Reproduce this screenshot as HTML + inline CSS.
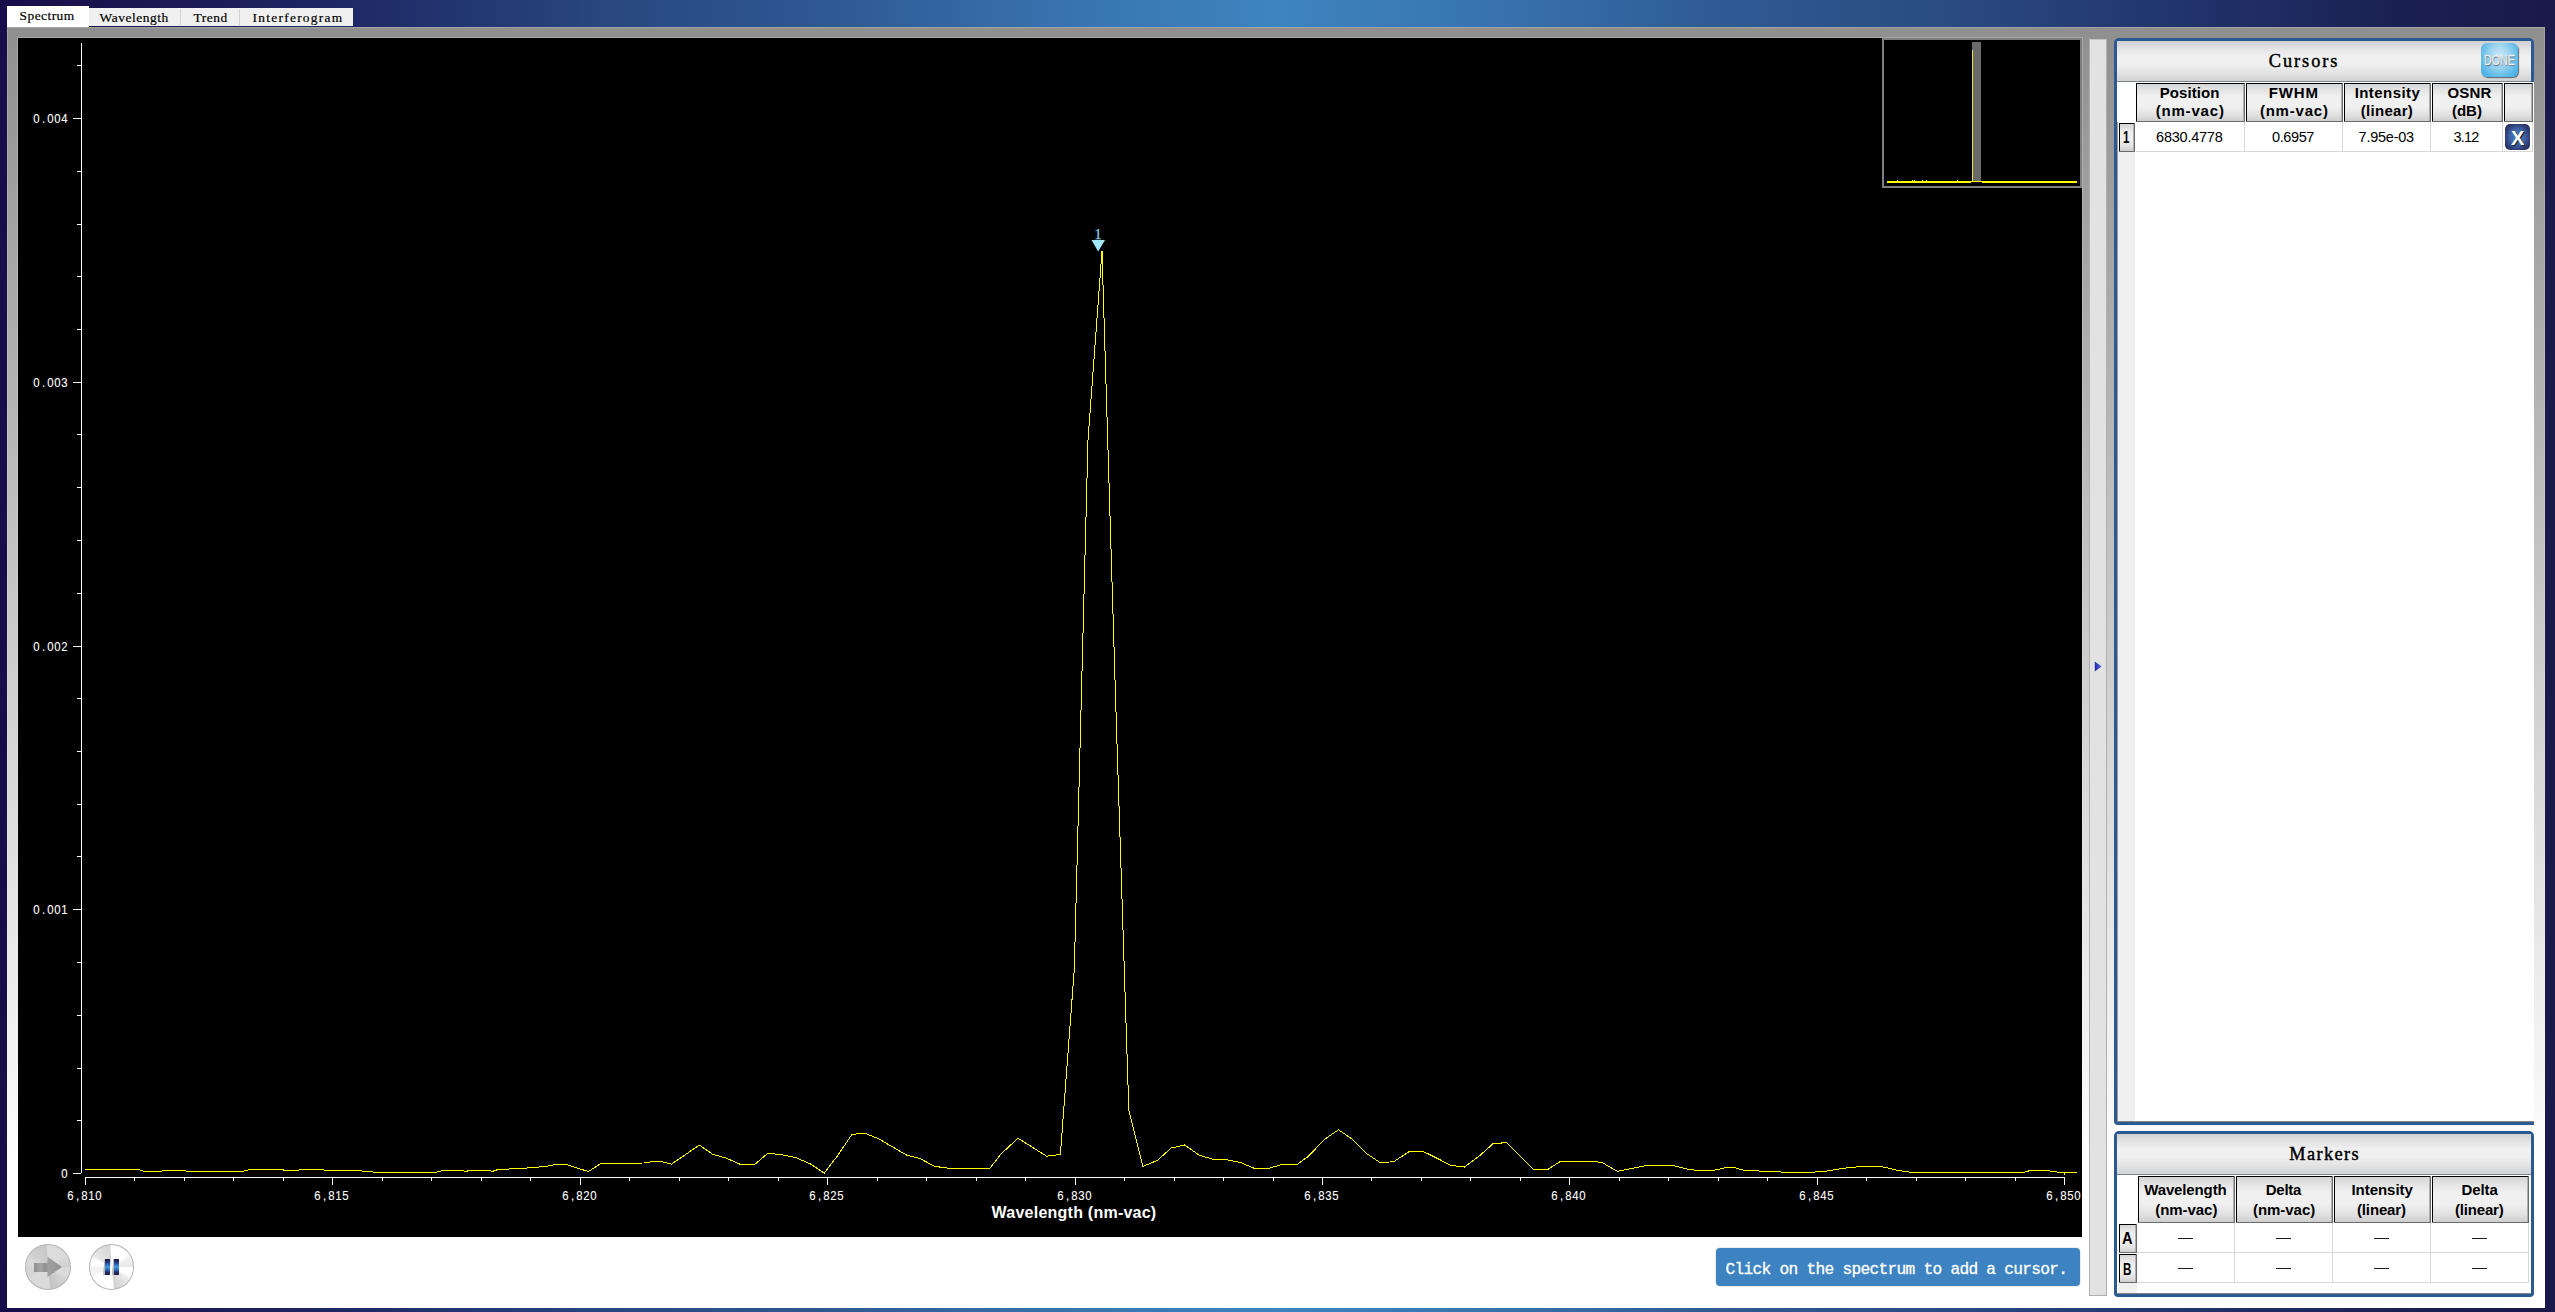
<!DOCTYPE html>
<html><head><meta charset="utf-8"><title>Spectrum</title>
<style>
html,body{margin:0;padding:0}
body{width:2555px;height:1312px;overflow:hidden;position:relative;
 background:linear-gradient(to right,#170d49 0%,#1b1852 6%,#1f2a66 14%,#284680 23.5%,#2f5a94 33%,#3874b0 42%,#3d84c0 50%,#3874b0 58%,#2f5b94 67%,#2a4a82 76.5%,#21326a 86%,#1b2052 94%,#19194a 100%);
 font-family:"Liberation Sans",sans-serif;}
div,span,i,svg{position:absolute;box-sizing:border-box}
i{font-style:normal;position:static;display:inline-block;text-align:center}
#main{left:7px;top:27px;width:2538px;height:1281px;background:linear-gradient(to bottom,#8f8f8f 0%,#ffffff 89.5%);box-shadow:inset 1px 1px 0 rgba(255,255,240,.18),inset -1px 0 0 rgba(255,255,240,.15)}
.tab{font-family:"Liberation Mono",monospace;font-size:12.4px;color:#000;white-space:nowrap;line-height:14px}
.tab i{width:7px}
#plot{left:18px;top:38px;width:2064px;height:1199px;background:#000;box-shadow:0 0 0 1px rgba(255,255,255,.2)}
.ax{font-family:"Liberation Sans",sans-serif;font-size:12.6px;color:#fff;white-space:nowrap;line-height:12px;height:12px;-webkit-text-stroke:0.1px #fff}
.ax i{width:7px;transform:scaleX(.9)}
.ttl{font-family:"Liberation Serif",serif;font-size:17px;line-height:20px;text-align:center;color:#000;white-space:nowrap}
.ttl i{width:9px}
.st{font-family:"Liberation Mono",monospace;font-weight:bold;font-size:15px;line-height:18px;color:#fff;white-space:nowrap}
.st i{width:9px}
.val{font-size:14.5px;line-height:19px;text-align:center;color:#000;white-space:nowrap}
</style></head><body>

<div id="main"></div>
<div style="left:7px;top:6px;width:82px;height:21px;background:#fff"></div>
<div style="left:89px;top:8px;width:264px;height:18px;background:#f0f0f0"></div>
<div style="left:180px;top:9px;width:1px;height:16px;background:#d4d4d4"></div>
<div style="left:239px;top:9px;width:1px;height:16px;background:#d4d4d4"></div>
<div style="left:19.60px;top:8px;font-family:'Liberation Serif',serif;font-size:13.4px;line-height:16px;letter-spacing:0.463px;color:#000;white-space:nowrap;-webkit-text-stroke:0.2px #000;">Spectrum</div>
<div style="left:99.60px;top:10px;font-family:'Liberation Serif',serif;font-size:13.4px;line-height:16px;letter-spacing:0.549px;color:#000;white-space:nowrap;-webkit-text-stroke:0.2px #000;">Wavelength</div>
<div style="left:193.60px;top:10px;font-family:'Liberation Serif',serif;font-size:13.4px;line-height:16px;letter-spacing:0.517px;color:#000;white-space:nowrap;-webkit-text-stroke:0.2px #000;">Trend</div>
<div style="left:252.60px;top:10px;font-family:'Liberation Serif',serif;font-size:13.4px;line-height:16px;letter-spacing:1.267px;color:#000;white-space:nowrap;-webkit-text-stroke:0.2px #000;">Interferogram</div>
<div id="plot"></div>
<svg width="2555" height="1312" viewBox="0 0 2555 1312" style="left:0;top:0" shape-rendering="crispEdges"><rect x="81" y="43" width="1" height="1130" fill="#fff"/><rect x="73" y="1173" width="8" height="1" fill="#fff"/><rect x="77" y="1120" width="4" height="1" fill="#fff"/><rect x="77" y="1068" width="4" height="1" fill="#fff"/><rect x="77" y="1015" width="4" height="1" fill="#fff"/><rect x="77" y="962" width="4" height="1" fill="#fff"/><rect x="73" y="909" width="8" height="1" fill="#fff"/><rect x="77" y="856" width="4" height="1" fill="#fff"/><rect x="77" y="804" width="4" height="1" fill="#fff"/><rect x="77" y="751" width="4" height="1" fill="#fff"/><rect x="77" y="698" width="4" height="1" fill="#fff"/><rect x="73" y="646" width="8" height="1" fill="#fff"/><rect x="77" y="593" width="4" height="1" fill="#fff"/><rect x="77" y="540" width="4" height="1" fill="#fff"/><rect x="77" y="487" width="4" height="1" fill="#fff"/><rect x="77" y="434" width="4" height="1" fill="#fff"/><rect x="73" y="382" width="8" height="1" fill="#fff"/><rect x="77" y="329" width="4" height="1" fill="#fff"/><rect x="77" y="276" width="4" height="1" fill="#fff"/><rect x="77" y="224" width="4" height="1" fill="#fff"/><rect x="77" y="171" width="4" height="1" fill="#fff"/><rect x="73" y="118" width="8" height="1" fill="#fff"/><rect x="77" y="65" width="4" height="1" fill="#fff"/><rect x="85" y="1177" width="1980" height="1" fill="#fff"/><rect x="85" y="1177" width="1" height="8" fill="#fff"/><rect x="134" y="1177" width="1" height="4" fill="#fff"/><rect x="184" y="1177" width="1" height="4" fill="#fff"/><rect x="233" y="1177" width="1" height="4" fill="#fff"/><rect x="283" y="1177" width="1" height="4" fill="#fff"/><rect x="332" y="1177" width="1" height="8" fill="#fff"/><rect x="382" y="1177" width="1" height="4" fill="#fff"/><rect x="431" y="1177" width="1" height="4" fill="#fff"/><rect x="481" y="1177" width="1" height="4" fill="#fff"/><rect x="530" y="1177" width="1" height="4" fill="#fff"/><rect x="580" y="1177" width="1" height="8" fill="#fff"/><rect x="629" y="1177" width="1" height="4" fill="#fff"/><rect x="679" y="1177" width="1" height="4" fill="#fff"/><rect x="728" y="1177" width="1" height="4" fill="#fff"/><rect x="778" y="1177" width="1" height="4" fill="#fff"/><rect x="827" y="1177" width="1" height="8" fill="#fff"/><rect x="877" y="1177" width="1" height="4" fill="#fff"/><rect x="926" y="1177" width="1" height="4" fill="#fff"/><rect x="976" y="1177" width="1" height="4" fill="#fff"/><rect x="1025" y="1177" width="1" height="4" fill="#fff"/><rect x="1075" y="1177" width="1" height="8" fill="#fff"/><rect x="1124" y="1177" width="1" height="4" fill="#fff"/><rect x="1174" y="1177" width="1" height="4" fill="#fff"/><rect x="1223" y="1177" width="1" height="4" fill="#fff"/><rect x="1273" y="1177" width="1" height="4" fill="#fff"/><rect x="1322" y="1177" width="1" height="8" fill="#fff"/><rect x="1371" y="1177" width="1" height="4" fill="#fff"/><rect x="1421" y="1177" width="1" height="4" fill="#fff"/><rect x="1470" y="1177" width="1" height="4" fill="#fff"/><rect x="1520" y="1177" width="1" height="4" fill="#fff"/><rect x="1569" y="1177" width="1" height="8" fill="#fff"/><rect x="1619" y="1177" width="1" height="4" fill="#fff"/><rect x="1668" y="1177" width="1" height="4" fill="#fff"/><rect x="1718" y="1177" width="1" height="4" fill="#fff"/><rect x="1767" y="1177" width="1" height="4" fill="#fff"/><rect x="1817" y="1177" width="1" height="8" fill="#fff"/><rect x="1866" y="1177" width="1" height="4" fill="#fff"/><rect x="1916" y="1177" width="1" height="4" fill="#fff"/><rect x="1965" y="1177" width="1" height="4" fill="#fff"/><rect x="2015" y="1177" width="1" height="4" fill="#fff"/><rect x="2064" y="1177" width="1" height="8" fill="#fff"/><polyline points="85.0,1169.5 138.0,1169.5 145.0,1171.5 158.0,1171.5 166.0,1170.5 185.0,1170.5 187.0,1171.5 242.0,1171.5 250.0,1169.5 282.0,1169.5 285.0,1170.5 298.0,1170.5 300.0,1169.5 323.0,1169.5 325.0,1170.5 358.0,1170.5 366.0,1171.5 380.0,1172.5 435.0,1172.5 443.0,1170.5 463.0,1170.5 465.0,1171.5 470.0,1170.5 490.0,1170.5 492.0,1171.5 498.0,1169.5 520.0,1168.5 535.0,1167.5 548.0,1166.0 558.0,1164.0 565.0,1164.0 572.0,1166.5 588.4,1171.5 601.1,1163.4 644.1,1163.0 653.0,1161.5 660.8,1161.5 671.5,1164.2 699.3,1145.0 712.6,1154.2 726.3,1158.2 741.0,1164.6 754.1,1165.0 767.8,1153.3 781.1,1154.6 795.8,1157.6 810.5,1164.0 824.2,1173.2 837.9,1155.2 852.0,1134.3 865.3,1133.3 879.0,1139.0 892.7,1147.0 906.8,1155.2 920.0,1158.6 934.8,1166.4 949.4,1168.3 975.9,1168.9 990.0,1168.1 1001.3,1153.7 1018.0,1138.2 1032.6,1147.4 1046.6,1156.2 1060.4,1154.4 1074.3,969.0 1088.0,440.0 1102.0,251.0 1115.8,706.0 1128.8,1109.8 1142.9,1166.4 1157.2,1160.5 1171.3,1148.0 1184.6,1145.0 1199.3,1155.2 1213.5,1159.5 1226.7,1159.7 1240.4,1162.5 1255.6,1168.9 1269.1,1168.3 1281.4,1164.6 1297.1,1164.6 1307.9,1156.6 1325.5,1138.6 1338.6,1129.8 1351.9,1139.0 1367.0,1153.9 1380.7,1163.0 1394.0,1161.5 1409.6,1151.3 1422.9,1151.3 1437.0,1158.2 1450.7,1165.4 1464.4,1167.0 1479.1,1156.2 1492.8,1143.9 1506.5,1142.5 1533.9,1169.9 1547.6,1169.5 1560.3,1161.5 1576.0,1161.7 1595.5,1161.5 1602.4,1162.7 1617.4,1171.4 1647.0,1165.4 1672.4,1165.4 1688.0,1169.3 1701.8,1170.9 1715.5,1170.0 1727.2,1167.4 1734.0,1167.4 1743.8,1170.3 1756.6,1170.9 1784.9,1172.2 1813.3,1172.2 1828.0,1170.9 1842.7,1168.3 1862.2,1166.4 1880.8,1166.4 1897.5,1170.3 1911.2,1172.4 2022.7,1172.5 2030.5,1170.5 2049.5,1170.5 2050.5,1171.5 2056.5,1171.5 2057.5,1172.5 2064.0,1172.5 2064.5,1173.5 2065.0,1172.5 2077.0,1172.5" fill="none" stroke="#ffff00" stroke-width="1"/><polygon points="1091.5,240 1105,240 1098.2,251.5" fill="#a2e6fb" shape-rendering="auto"/></svg>
<div class="ax" style="left:33px;top:113px"><i>0</i><i>.</i><i>0</i><i>0</i><i>4</i></div>
<div class="ax" style="left:33px;top:377px"><i>0</i><i>.</i><i>0</i><i>0</i><i>3</i></div>
<div class="ax" style="left:33px;top:641px"><i>0</i><i>.</i><i>0</i><i>0</i><i>2</i></div>
<div class="ax" style="left:33px;top:904px"><i>0</i><i>.</i><i>0</i><i>0</i><i>1</i></div>
<div class="ax" style="left:61px;top:1168px"><i>0</i></div>
<div class="ax" style="left:67px;top:1190px"><i>6</i><i>,</i><i>8</i><i>1</i><i>0</i></div>
<div class="ax" style="left:314px;top:1190px"><i>6</i><i>,</i><i>8</i><i>1</i><i>5</i></div>
<div class="ax" style="left:562px;top:1190px"><i>6</i><i>,</i><i>8</i><i>2</i><i>0</i></div>
<div class="ax" style="left:809px;top:1190px"><i>6</i><i>,</i><i>8</i><i>2</i><i>5</i></div>
<div class="ax" style="left:1057px;top:1190px"><i>6</i><i>,</i><i>8</i><i>3</i><i>0</i></div>
<div class="ax" style="left:1304px;top:1190px"><i>6</i><i>,</i><i>8</i><i>3</i><i>5</i></div>
<div class="ax" style="left:1551px;top:1190px"><i>6</i><i>,</i><i>8</i><i>4</i><i>0</i></div>
<div class="ax" style="left:1799px;top:1190px"><i>6</i><i>,</i><i>8</i><i>4</i><i>5</i></div>
<div class="ax" style="left:2046px;top:1190px"><i>6</i><i>,</i><i>8</i><i>5</i><i>0</i></div>
<div style="left:991.60px;top:1203px;font-family:'Liberation Sans',sans-serif;font-size:16px;line-height:20px;letter-spacing:0.238px;color:#fff;white-space:nowrap;font-weight:bold;">Wavelength (nm-vac)</div>
<div style="left:1091px;top:226px;width:14px;text-align:center;color:#86cce4;font-family:'Liberation Serif',serif;font-size:15px;line-height:17px;-webkit-text-stroke:0.25px #86cce4">1</div>
<div style="left:1882px;top:38px;width:200px;height:150px;background:#000;border:2px solid #7e7e7e"></div>
<div style="left:1972px;top:42px;width:9px;height:139px;background:#6a6a6a"></div>
<div style="left:1972px;top:50px;width:1px;height:131px;background:#e8e050"></div>
<div style="left:1887px;top:181px;width:190px;height:2px;background:#ffff00"></div>
<div style="left:1897px;top:180px;width:1px;height:1px;background:#ffff00"></div>
<div style="left:1912px;top:180px;width:1px;height:1px;background:#ffff00"></div>
<div style="left:1914px;top:180px;width:1px;height:1px;background:#ffff00"></div>
<div style="left:1922px;top:180px;width:1px;height:1px;background:#ffff00"></div>
<div style="left:1926px;top:180px;width:1px;height:1px;background:#ffff00"></div>
<div style="left:1957px;top:180px;width:1px;height:1px;background:#ffff00"></div>
<div style="left:1971px;top:182px;width:11px;height:1px;background:#000"></div>
<div style="left:2089px;top:39px;width:18px;height:1257px;background:#e2e2e2;border:1px solid #b0b0b0;border-top-color:#c4c4c4"></div>
<svg width="10" height="12" style="left:2094px;top:661px" viewBox="0 0 10 12"><defs><linearGradient id="ag" x1="0" x2="1"><stop offset="0" stop-color="#2428a8"/><stop offset="1" stop-color="#5868e0"/></linearGradient></defs><polygon points="0.8,0.5 7.6,5.6 0.8,10.6" fill="url(#ag)"/></svg>
<div style="left:2114px;top:38px;width:420px;height:1087px;background:#2b5a93;border-radius:5px 5px 0 4px"></div>
<div style="left:2117px;top:1121px;width:417px;height:1px;background:#858585"></div>
<div style="left:2117px;top:82px;width:417px;height:1039px;background:#fff"></div>
<div style="left:2117px;top:122px;width:1px;height:999px;background:#9a9a9a"></div>
<div style="left:2118px;top:122px;width:17px;height:999px;background:#f0f0f0"></div>
<div style="left:2117px;top:41px;width:414px;height:40px;background:linear-gradient(to bottom,#d0d0d0 0%,#d8d8d8 8%,#e6e6e6 22%,#f0f0f0 38%,#f0f0f0 58%,#e4e4e4 78%,#d8d8d8 92%,#d2d2d2 100%)"></div>
<div style="left:2117px;top:81px;width:414px;height:1px;background:#7a8492"></div>
<div style="left:2268.80px;top:50px;font-family:'Liberation Serif',serif;font-size:18.3px;line-height:22px;letter-spacing:1.961px;color:#000;white-space:nowrap;-webkit-text-stroke:0.45px #000;">Cursors</div>
<div style="left:2135px;top:82px;width:110px;height:40px;background:#fff"></div><div style="left:2136px;top:83px;width:109px;height:39px;background:#6c6c6c"></div><div style="left:2136px;top:83px;width:108px;height:38px;background:#000"></div><div style="left:2137px;top:84px;width:107px;height:37px;background:linear-gradient(to bottom,#d4d4d4 0%,#e2e2e2 14%,#f0f0f0 34%,#f0f0f0 60%,#e2e2e2 82%,#cecece 100%);border-right:1px solid #b0b0b0"></div>
<div style="left:2245px;top:82px;width:98px;height:40px;background:#fff"></div><div style="left:2246px;top:83px;width:97px;height:39px;background:#6c6c6c"></div><div style="left:2246px;top:83px;width:96px;height:38px;background:#000"></div><div style="left:2247px;top:84px;width:95px;height:37px;background:linear-gradient(to bottom,#d4d4d4 0%,#e2e2e2 14%,#f0f0f0 34%,#f0f0f0 60%,#e2e2e2 82%,#cecece 100%);border-right:1px solid #b0b0b0"></div>
<div style="left:2343px;top:82px;width:88px;height:40px;background:#fff"></div><div style="left:2344px;top:83px;width:87px;height:39px;background:#6c6c6c"></div><div style="left:2344px;top:83px;width:86px;height:38px;background:#000"></div><div style="left:2345px;top:84px;width:85px;height:37px;background:linear-gradient(to bottom,#d4d4d4 0%,#e2e2e2 14%,#f0f0f0 34%,#f0f0f0 60%,#e2e2e2 82%,#cecece 100%);border-right:1px solid #b0b0b0"></div>
<div style="left:2431px;top:82px;width:72px;height:40px;background:#fff"></div><div style="left:2432px;top:83px;width:71px;height:39px;background:#6c6c6c"></div><div style="left:2432px;top:83px;width:70px;height:38px;background:#000"></div><div style="left:2433px;top:84px;width:69px;height:37px;background:linear-gradient(to bottom,#d4d4d4 0%,#e2e2e2 14%,#f0f0f0 34%,#f0f0f0 60%,#e2e2e2 82%,#cecece 100%);border-right:1px solid #b0b0b0"></div>
<div style="left:2503px;top:82px;width:30px;height:40px;background:#fff"></div><div style="left:2504px;top:83px;width:29px;height:39px;background:#6c6c6c"></div><div style="left:2504px;top:83px;width:28px;height:38px;background:#000"></div><div style="left:2505px;top:84px;width:27px;height:37px;background:linear-gradient(to bottom,#d4d4d4 0%,#e2e2e2 14%,#f0f0f0 34%,#f0f0f0 60%,#e2e2e2 82%,#cecece 100%);border-right:1px solid #b0b0b0"></div>
<div style="left:2159.70px;top:84px;font-family:'Liberation Sans',sans-serif;font-size:15px;line-height:18px;letter-spacing:0.077px;color:#000;white-space:nowrap;font-weight:bold;">Position</div>
<div style="left:2155.70px;top:102px;font-family:'Liberation Sans',sans-serif;font-size:15px;line-height:18px;letter-spacing:0.811px;color:#000;white-space:nowrap;font-weight:bold;">(nm-vac)</div>
<div style="left:2268.70px;top:84px;font-family:'Liberation Sans',sans-serif;font-size:15px;line-height:18px;letter-spacing:0.917px;color:#000;white-space:nowrap;font-weight:bold;">FWHM</div>
<div style="left:2259.90px;top:102px;font-family:'Liberation Sans',sans-serif;font-size:15px;line-height:18px;letter-spacing:0.783px;color:#000;white-space:nowrap;font-weight:bold;">(nm-vac)</div>
<div style="left:2354.70px;top:84px;font-family:'Liberation Sans',sans-serif;font-size:15px;line-height:18px;letter-spacing:0.428px;color:#000;white-space:nowrap;font-weight:bold;">Intensity</div>
<div style="left:2360.70px;top:102px;font-family:'Liberation Sans',sans-serif;font-size:15px;line-height:18px;letter-spacing:0.299px;color:#000;white-space:nowrap;font-weight:bold;">(linear)</div>
<div style="left:2447.40px;top:84px;font-family:'Liberation Sans',sans-serif;font-size:15px;line-height:18px;letter-spacing:0.188px;color:#000;white-space:nowrap;font-weight:bold;">OSNR</div>
<div style="left:2451.90px;top:102px;font-family:'Liberation Sans',sans-serif;font-size:15px;line-height:18px;letter-spacing:0.005px;color:#000;white-space:nowrap;font-weight:bold;">(dB)</div>
<div style="left:2244px;top:122px;width:1px;height:30px;background:#d8d8d8"></div>
<div style="left:2342px;top:122px;width:1px;height:30px;background:#d8d8d8"></div>
<div style="left:2430px;top:122px;width:1px;height:30px;background:#d8d8d8"></div>
<div style="left:2502px;top:122px;width:1px;height:30px;background:#d8d8d8"></div>
<div style="left:2532px;top:122px;width:1px;height:30px;background:#d8d8d8"></div>
<div style="left:2136px;top:151px;width:397px;height:1px;background:#d8d8d8"></div>
<div style="left:2118px;top:151px;width:17px;height:1px;background:#8a8a8a"></div>
<div style="left:2118px;top:122px;width:17px;height:30px;background:#fff"></div><div style="left:2119px;top:123px;width:16px;height:29px;background:#6c6c6c"></div><div style="left:2119px;top:123px;width:15px;height:28px;background:#000"></div><div style="left:2120px;top:124px;width:14px;height:27px;background:linear-gradient(to bottom,#d4d4d4 0%,#e2e2e2 14%,#f0f0f0 34%,#f0f0f0 60%,#e2e2e2 82%,#cecece 100%);border-right:1px solid #b0b0b0"></div>
<div style="left:2123.00px;top:128px;font-family:'Liberation Sans',sans-serif;font-size:17px;line-height:20px;transform-origin:0 0;transform:scaleX(0.6771);color:#000;white-space:nowrap;font-weight:bold;">1</div>
<div style="left:2156.10px;top:128px;font-family:'Liberation Sans',sans-serif;font-size:14.5px;line-height:18px;letter-spacing:-0.243px;color:#000;white-space:nowrap;">6830.4778</div>
<div style="left:2272.00px;top:128px;font-family:'Liberation Sans',sans-serif;font-size:14.5px;line-height:18px;letter-spacing:-0.391px;color:#000;white-space:nowrap;">0.6957</div>
<div style="left:2358.60px;top:128px;font-family:'Liberation Sans',sans-serif;font-size:14.5px;line-height:18px;letter-spacing:-0.249px;color:#000;white-space:nowrap;">7.95e-03</div>
<div style="left:2453.50px;top:128px;font-family:'Liberation Sans',sans-serif;font-size:14.5px;line-height:18px;letter-spacing:-0.772px;color:#000;white-space:nowrap;">3.12</div>
<div style="left:2505px;top:124px;width:25px;height:26px;border-radius:5px;background:radial-gradient(ellipse at 50% 50%,#4e80c4 0%,#3f66a8 40%,#2c3468 78%,#2a2a5a 100%)"></div>
<div style="left:2511.00px;top:126px;font-family:'Liberation Sans',sans-serif;font-size:20px;line-height:24px;letter-spacing:0.660px;color:#fff;white-space:nowrap;font-weight:bold;text-shadow:1px 1px 1px #0a1428;">X</div>
<div style="left:2481px;top:43px;width:37px;height:34px;border-radius:6px;background:radial-gradient(ellipse at 50% 38%,#cfeaf6 0%,#9cd4ee 38%,#58b8e8 75%,#3aa8e4 100%);box-shadow:1px 1px 1px rgba(40,60,80,.75)"></div>
<div style="left:2484.20px;top:51px;font-family:'Liberation Sans',sans-serif;font-size:14px;line-height:18px;transform-origin:0 0;transform:scaleX(0.7615);color:#e9edf0;white-space:nowrap;-webkit-text-stroke:0.3px #e9edf0;text-shadow:0.7px 1px 1px rgba(50,70,90,.9);">DONE</div>
<div style="left:2114px;top:1131px;width:420px;height:166px;background:#2b5a93;border-radius:5px 5px 4px 4px"></div>
<div style="left:2117px;top:1175px;width:414px;height:119px;background:#fff"></div>
<div style="left:2117px;top:1134px;width:414px;height:40px;background:linear-gradient(to bottom,#d0d0d0 0%,#d8d8d8 8%,#e6e6e6 22%,#f0f0f0 38%,#f0f0f0 58%,#e4e4e4 78%,#d8d8d8 92%,#d2d2d2 100%)"></div>
<div style="left:2117px;top:1174px;width:414px;height:1px;background:#7a8492"></div>
<div style="left:2289.30px;top:1143px;font-family:'Liberation Serif',serif;font-size:18.3px;line-height:22px;letter-spacing:1.387px;color:#000;white-space:nowrap;-webkit-text-stroke:0.45px #000;">Markers</div>
<div style="left:2137px;top:1175px;width:98px;height:48px;background:#fff"></div><div style="left:2138px;top:1176px;width:97px;height:47px;background:#6c6c6c"></div><div style="left:2138px;top:1176px;width:96px;height:46px;background:#000"></div><div style="left:2139px;top:1177px;width:95px;height:45px;background:linear-gradient(to bottom,#d4d4d4 0%,#e2e2e2 14%,#f0f0f0 34%,#f0f0f0 60%,#e2e2e2 82%,#cecece 100%);border-right:1px solid #b0b0b0"></div>
<div style="left:2235px;top:1175px;width:98px;height:48px;background:#fff"></div><div style="left:2236px;top:1176px;width:97px;height:47px;background:#6c6c6c"></div><div style="left:2236px;top:1176px;width:96px;height:46px;background:#000"></div><div style="left:2237px;top:1177px;width:95px;height:45px;background:linear-gradient(to bottom,#d4d4d4 0%,#e2e2e2 14%,#f0f0f0 34%,#f0f0f0 60%,#e2e2e2 82%,#cecece 100%);border-right:1px solid #b0b0b0"></div>
<div style="left:2333px;top:1175px;width:98px;height:48px;background:#fff"></div><div style="left:2334px;top:1176px;width:97px;height:47px;background:#6c6c6c"></div><div style="left:2334px;top:1176px;width:96px;height:46px;background:#000"></div><div style="left:2335px;top:1177px;width:95px;height:45px;background:linear-gradient(to bottom,#d4d4d4 0%,#e2e2e2 14%,#f0f0f0 34%,#f0f0f0 60%,#e2e2e2 82%,#cecece 100%);border-right:1px solid #b0b0b0"></div>
<div style="left:2431px;top:1175px;width:98px;height:48px;background:#fff"></div><div style="left:2432px;top:1176px;width:97px;height:47px;background:#6c6c6c"></div><div style="left:2432px;top:1176px;width:96px;height:46px;background:#000"></div><div style="left:2433px;top:1177px;width:95px;height:45px;background:linear-gradient(to bottom,#d4d4d4 0%,#e2e2e2 14%,#f0f0f0 34%,#f0f0f0 60%,#e2e2e2 82%,#cecece 100%);border-right:1px solid #b0b0b0"></div>
<div style="left:2144.20px;top:1180px;font-family:'Liberation Sans',sans-serif;font-size:15px;line-height:20px;letter-spacing:-0.125px;color:#000;white-space:nowrap;font-weight:bold;">Wavelength</div>
<div style="left:2155.20px;top:1200px;font-family:'Liberation Sans',sans-serif;font-size:15px;line-height:20px;letter-spacing:-0.046px;color:#000;white-space:nowrap;font-weight:bold;">(nm-vac)</div>
<div style="left:2265.80px;top:1180px;font-family:'Liberation Sans',sans-serif;font-size:15px;line-height:20px;letter-spacing:-0.270px;color:#000;white-space:nowrap;font-weight:bold;">Delta</div>
<div style="left:2253.00px;top:1200px;font-family:'Liberation Sans',sans-serif;font-size:15px;line-height:20px;letter-spacing:-0.046px;color:#000;white-space:nowrap;font-weight:bold;">(nm-vac)</div>
<div style="left:2351.50px;top:1180px;font-family:'Liberation Sans',sans-serif;font-size:15px;line-height:20px;letter-spacing:-0.047px;color:#000;white-space:nowrap;font-weight:bold;">Intensity</div>
<div style="left:2357.00px;top:1200px;font-family:'Liberation Sans',sans-serif;font-size:15px;line-height:20px;letter-spacing:-0.144px;color:#000;white-space:nowrap;font-weight:bold;">(linear)</div>
<div style="left:2461.50px;top:1180px;font-family:'Liberation Sans',sans-serif;font-size:15px;line-height:20px;letter-spacing:-0.095px;color:#000;white-space:nowrap;font-weight:bold;">Delta</div>
<div style="left:2454.90px;top:1200px;font-family:'Liberation Sans',sans-serif;font-size:15px;line-height:20px;letter-spacing:-0.159px;color:#000;white-space:nowrap;font-weight:bold;">(linear)</div>
<div style="left:2234px;top:1223px;width:1px;height:60px;background:#d8d8d8"></div>
<div style="left:2332px;top:1223px;width:1px;height:60px;background:#d8d8d8"></div>
<div style="left:2430px;top:1223px;width:1px;height:60px;background:#d8d8d8"></div>
<div style="left:2528px;top:1223px;width:1px;height:60px;background:#d8d8d8"></div>
<div style="left:2118px;top:1252px;width:411px;height:1px;background:#d8d8d8"></div>
<div style="left:2118px;top:1282px;width:411px;height:1px;background:#d8d8d8"></div>
<div style="left:2118px;top:1283px;width:19px;height:10px;background:#f0f0f0"></div>
<div style="left:2117px;top:1293px;width:414px;height:1px;background:#858585"></div>
<div style="left:2118px;top:1223px;width:19px;height:30px;background:#fff"></div><div style="left:2119px;top:1224px;width:18px;height:29px;background:#6c6c6c"></div><div style="left:2119px;top:1224px;width:17px;height:28px;background:#000"></div><div style="left:2120px;top:1225px;width:16px;height:27px;background:linear-gradient(to bottom,#d4d4d4 0%,#e2e2e2 14%,#f0f0f0 34%,#f0f0f0 60%,#e2e2e2 82%,#cecece 100%);border-right:1px solid #b0b0b0"></div>
<div style="left:2118px;top:1253px;width:19px;height:30px;background:#fff"></div><div style="left:2119px;top:1254px;width:18px;height:29px;background:#6c6c6c"></div><div style="left:2119px;top:1254px;width:17px;height:28px;background:#000"></div><div style="left:2120px;top:1255px;width:16px;height:27px;background:linear-gradient(to bottom,#d4d4d4 0%,#e2e2e2 14%,#f0f0f0 34%,#f0f0f0 60%,#e2e2e2 82%,#cecece 100%);border-right:1px solid #b0b0b0"></div>
<div style="left:2122.20px;top:1229px;font-family:'Liberation Sans',sans-serif;font-size:16.7px;line-height:20px;transform-origin:0 0;transform:scaleX(0.8791);color:#000;white-space:nowrap;font-weight:bold;">A</div>
<div style="left:2123.10px;top:1259px;font-family:'Liberation Sans',sans-serif;font-size:16.4px;line-height:20px;transform-origin:0 0;transform:scaleX(0.7094);color:#000;white-space:nowrap;font-weight:bold;">B</div>
<div style="left:2178.0px;top:1238px;width:15px;height:1px;background:#1c1c1c"></div>
<div style="left:2178.0px;top:1268px;width:15px;height:1px;background:#1c1c1c"></div>
<div style="left:2276.0px;top:1238px;width:15px;height:1px;background:#1c1c1c"></div>
<div style="left:2276.0px;top:1268px;width:15px;height:1px;background:#1c1c1c"></div>
<div style="left:2374.0px;top:1238px;width:15px;height:1px;background:#1c1c1c"></div>
<div style="left:2374.0px;top:1268px;width:15px;height:1px;background:#1c1c1c"></div>
<div style="left:2472.0px;top:1238px;width:15px;height:1px;background:#1c1c1c"></div>
<div style="left:2472.0px;top:1268px;width:15px;height:1px;background:#1c1c1c"></div>
<div style="left:25.2px;top:1244.1px;width:45.5px;height:45.7px;border-radius:50%;border:1.2px solid #b4b4b4;background:conic-gradient(from 0deg,#dcdcdc 0deg,#dcdcdc 52deg,#d8d8d8 62deg,#d0d0d0 89deg,#dbdbdb 91deg,#dbdbdb 116deg,#d2d2d2 128deg,#c3c3c3 171deg,#dadada 176deg,#dadada 236deg,#d6d6d6 246deg,#d5d5d5 271deg,#dadada 274deg,#dadada 294deg,#d2d2d2 304deg,#c8c8c8 355deg,#dcdcdc 359deg)"></div>
<svg width="30" height="22" style="left:34px;top:1256px" viewBox="0 0 30 22"><defs><linearGradient id="pg" x1="0" x2="1"><stop offset="0" stop-color="#8e8e8e"/><stop offset=".25" stop-color="#a6a6a6"/><stop offset=".4" stop-color="#8f8f8f"/><stop offset=".5" stop-color="#a0a0a0"/><stop offset="1" stop-color="#929292"/></linearGradient></defs><polygon points="0,7 13.5,7 13.5,0.8 28,11 13.5,21 13.5,16 0,16" fill="url(#pg)"/></svg>
<div style="left:88.8px;top:1244.1px;width:45.5px;height:45.7px;border-radius:50%;border:1.4px solid #b6b6b6;background:conic-gradient(from 0deg,#fff 0deg,#fff 52deg,#f2f2f2 62deg,#e7e7e7 89deg,#fff 91deg,#fff 116deg,#e8e8e8 128deg,#d2d2d2 171deg,#fff 176deg,#fff 236deg,#f4f4f4 246deg,#f3f3f3 271deg,#fff 274deg,#fff 294deg,#e6e6e6 304deg,#d6d6d6 355deg,#fff 359deg)"></div>
<svg width="18" height="18" style="left:102px;top:1258px" viewBox="0 0 18 18"><polygon points="2.6,1 7.6,1 7.6,17 1,17" fill="#b8b8b8"/><polygon points="11.4,1 16.6,1 16.6,17 10,17" fill="#b8b8b8"/></svg>
<div style="left:105px;top:1259px;width:5px;height:16px;background:linear-gradient(to bottom,#22204e 0%,#24265a 14%,#2a5cb0 30%,#3f9fe2 50%,#2a5cb0 70%,#24265a 86%,#22204e 100%)"></div>
<div style="left:114px;top:1259px;width:5px;height:16px;background:linear-gradient(to bottom,#22204e 0%,#24265a 14%,#2a5cb0 30%,#3f9fe2 50%,#2a5cb0 70%,#24265a 86%,#22204e 100%)"></div>
<div style="left:1715px;top:1247px;width:366px;height:40px;border-radius:5px;background:#ececec"></div>
<div style="left:1716px;top:1248px;width:364px;height:38px;border-radius:4px;background:#3d83c1"></div>
<div style="left:1725.6px;top:1260px;font-family:'Liberation Mono',monospace;-webkit-text-stroke:0.28px #fff;font-size:16.2px;line-height:20px;letter-spacing:-0.722px;color:#fff;white-space:nowrap">Click on the spectrum to add a cursor.</div>
</body></html>
